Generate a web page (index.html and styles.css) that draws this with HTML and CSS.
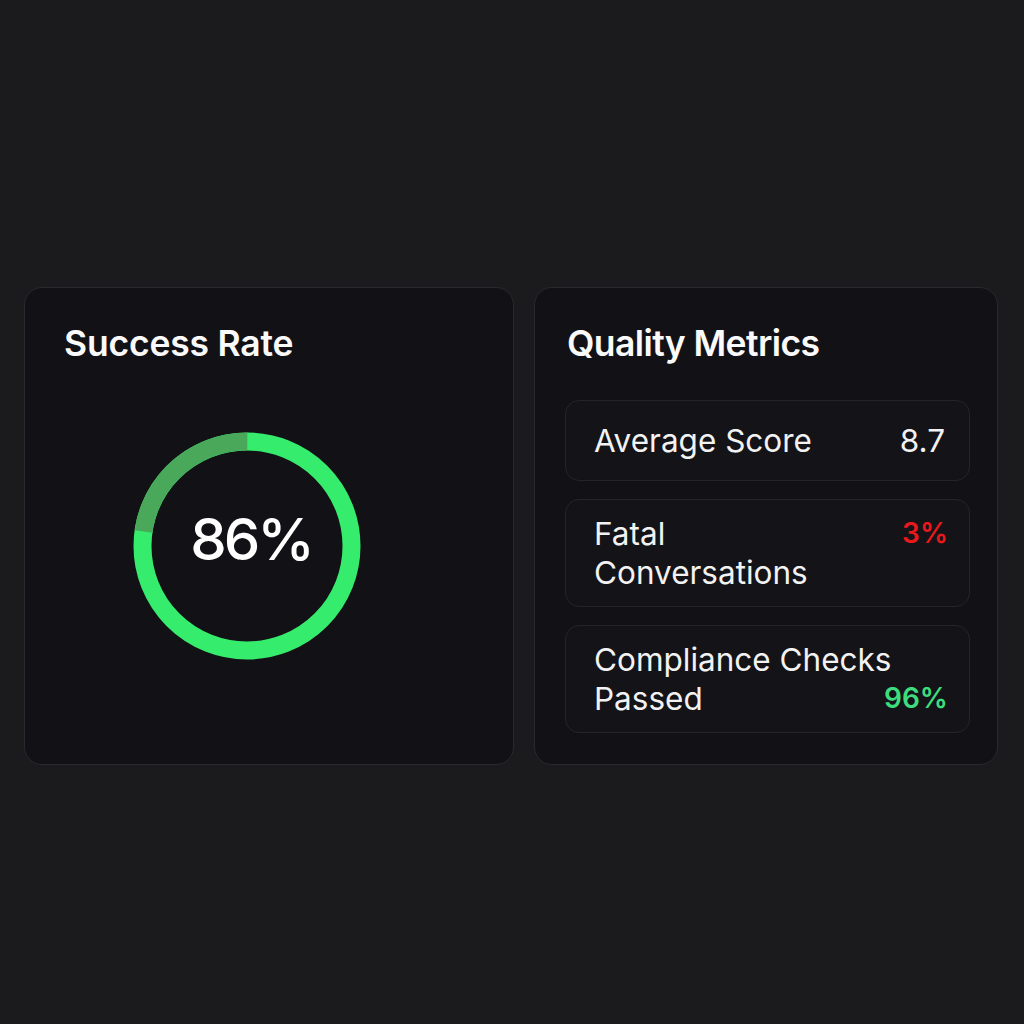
FILE: index.html
```html
<!DOCTYPE html>
<html lang="en">
<head>
    <meta charset="UTF-8">
    <meta name="viewport" content="width=device-width, initial-scale=1.0">
    <title>Conversation Quality</title>
    <link rel="stylesheet" href="styles.css">
</head>
<body>
    <div class="board">
        <section class="card card-success">
            <h2 class="card-title">Success Rate</h2>
            <div class="ring">
                <svg class="ring-svg" width="228" height="228" viewBox="0 0 228 228">
                    <circle cx="114" cy="114" r="104.5" fill="none" stroke="#36ec6c" stroke-width="18"/>
                    <circle cx="114" cy="114" r="104.5" fill="none" stroke="#4aa85b" stroke-width="18"
                        stroke-dasharray="149.6 656.6" transform="rotate(-172 114 114)"/>
                </svg>
                <div class="ring-value">86%</div>
            </div>
        </section>

        <section class="card card-metrics">
            <h2 class="card-title">Quality Metrics</h2>
            <div class="metric-list">
                <div class="metric">
                    <span class="metric-label">Average Score</span>
                    <span class="metric-value">8.7</span>
                </div>
                <div class="metric metric-top">
                    <span class="metric-label">Fatal<br>Conversations</span>
                    <span class="metric-value bad">3%</span>
                </div>
                <div class="metric metric-bottom">
                    <span class="metric-label">Compliance Checks<br>Passed</span>
                    <span class="metric-value good">96%</span>
                </div>
            </div>
        </section>
    </div>
</body>
</html>
```

FILE: styles.css
```css
* {
    margin: 0;
    padding: 0;
    box-sizing: border-box;
    font-family: 'Inter', 'Liberation Sans', sans-serif;
}

body {
    background-color: #1b1a1d;
    color: #f4f4f5;
    padding: 287px 0 0 24px;
    height: 1024px;
}

.board {
    display: flex;
    gap: 20px;
}

.card {
    height: 478px;
    background-color: #121116;
    border: 1px solid #2a292e;
    border-radius: 18px;
    padding-top: 35px;
}

.card-success {
    width: 490px;
    padding-left: 39px;
}

.card-metrics {
    width: 464px;
    padding-left: 30px;
    padding-right: 27px;
}

.card-title {
    font-size: 35.5px;
    font-weight: 600;
    line-height: 41px;
    letter-spacing: -0.2px;
    color: #fafafa;
}

.card-metrics .card-title {
    margin-left: 2px;
    letter-spacing: -0.6px;
}

/* donut */
.ring {
    display: grid;
    width: 228px;
    height: 228px;
    margin: 68px 0 0 69px;
}

.ring-svg,
.ring-value {
    grid-area: 1 / 1;
}

.ring-value {
    align-self: center;
    justify-self: center;
    margin: -14px 0 0 8px;
    font-size: 58px;
    font-weight: 500;
    letter-spacing: -3px;
    color: #fff;
}

/* metrics */
.metric-list {
    display: flex;
    flex-direction: column;
    gap: 18px;
    margin-top: 36px;
}

.metric {
    display: flex;
    justify-content: space-between;
    align-items: center;
    padding: 20px 24px 20px 28px;
    background-color: #141317;
    border: 1px solid #25242a;
    border-radius: 14px;
    font-size: 31.5px;
    line-height: 39px;
}

.metric-top {
    align-items: flex-start;
    padding-top: 14px;
    padding-bottom: 14px;
    padding-right: 21px;
}

.metric-bottom {
    align-items: flex-end;
    padding-top: 14px;
    padding-bottom: 14px;
    padding-right: 21px;
}

.metric-label {
    flex: 1;
    min-width: 0;
    color: #f2f2f3;
    white-space: nowrap;
}

.metric-value {
    flex: none;
    color: #f2f2f3;
}

.metric-value.bad {
    color: #e8181c;
    font-weight: 600;
    font-size: 28px;
}

.metric-value.good {
    color: #3ddc7e;
    font-weight: 600;
    font-size: 28px;
}
```
